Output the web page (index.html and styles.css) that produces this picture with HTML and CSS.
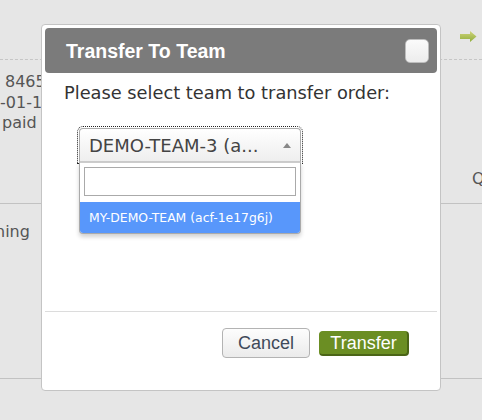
FILE: index.html
```html
<!DOCTYPE html>
<html>
<head>
<meta charset="utf-8">
<link rel="stylesheet" href="styles.css">
</head>
<body>
<div class="page">
  <div class="row row-head">
    <svg class="go-icon" width="17" height="11" viewBox="0 0 17 11">
      <defs>
        <linearGradient id="ga" x1="0" y1="0" x2="0" y2="1">
          <stop offset="0" stop-color="#d0d37a"/>
          <stop offset="1" stop-color="#8fae3c"/>
        </linearGradient>
      </defs>
      <path d="M0 3 H10 V0 L16.5 5.5 L10 11 V8 H0 Z" fill="url(#ga)"/>
    </svg>
  </div>
  <div class="row row-order">
    <div class="cell-left">
      <div class="l1">8465</div>
      <div class="l2">-01-10</div>
      <div class="l3">paid</div>
    </div>
    <div class="cell-right">Q</div>
  </div>
  <div class="row row-status">
    <div class="cell-left">ning</div>
  </div>
</div>

<div class="dialog">
  <div class="titlebar">
    <span class="title">Transfer To Team</span>
    <button class="close" aria-label="close"></button>
  </div>
  <div class="content">
    <p class="prompt">Please select team to transfer order:</p>
    <div class="select">
      <div class="select-box">
        <span class="select-text">DEMO-TEAM-3 (a...</span>
        <span class="caret"></span>
      </div>
      <div class="dropdown">
        <div class="search"><input type="text"></div>
        <ul class="options">
          <li class="option highlighted">MY-DEMO-TEAM (acf-1e17g6j)</li>
        </ul>
      </div>
    </div>
  </div>
  <div class="footer">
    <button class="btn btn-cancel">Cancel</button>
    <button class="btn btn-transfer">Transfer</button>
  </div>
</div>
</body>
</html>
```

FILE: styles.css
```css
html, body {
  margin: 0;
  padding: 0;
}
body {
  width: 482px;
  height: 420px;
  background: #e6e6e6;
  position: relative;
  overflow: hidden;
  font-family: "DejaVu Sans", sans-serif;
  color: #555;
}
.page {
  display: flex;
  flex-direction: column;
}
.row {
  display: flex;
}
.row-head {
  height: 60px;
  box-sizing: border-box;
  border-bottom: 1px dashed #c6c6c6;
  justify-content: flex-end;
  align-items: flex-start;
  padding-top: 31px;
  padding-right: 5px;
}
.go-icon {
  display: block;
}
.row-order {
  height: 144px;
  box-sizing: border-box;
  border-bottom: 1px solid #c2c2c2;
  justify-content: space-between;
  font-size: 16px;
  line-height: 20.5px;
}
.row-order .cell-left {
  padding-top: 12px;
}
.row-order .l1 { padding-left: 5px; }
.row-order .l2 { padding-left: 0; }
.row-order .l3 { padding-left: 2px; }
.row-order .cell-right {
  padding-top: 109px;
  width: 10px;
  overflow: hidden;
}
.row-status {
  height: 175px;
  box-sizing: border-box;
  border-bottom: 1px solid #c2c2c2;
  font-size: 16px;
  line-height: 20.5px;
}
.row-status .cell-left {
  padding-top: 18px;
  margin-left: -5px;
}

/* dialog */
.dialog {
  position: absolute;
  left: 41px;
  top: 24px;
  width: 392px;
  height: 359px;
  padding: 3px;
  background: #fff;
  border: 1px solid #c4c4c4;
  border-radius: 4px;
  display: flex;
  flex-direction: column;
}
.titlebar {
  height: 45px;
  flex: none;
  background: #7b7b7b;
  border-radius: 4px;
  display: flex;
  align-items: center;
  padding-left: 21px;
  padding-right: 8px;
}
.title {
  font-family: "Liberation Sans", Arial, sans-serif;
  font-weight: bold;
  font-size: 19.5px;
  color: #fff;
  flex: 1;
  padding-top: 1px;
}
.close {
  width: 24px;
  height: 24px;
  padding: 0;
  margin: 0;
  border: 1px solid #bdbdbd;
  border-radius: 5px;
  background: linear-gradient(#fbfbfb, #ececec);
}
.content {
  height: 238px;
  flex: none;
  padding: 0 0 0 19px;
}
.prompt {
  margin: 0;
  padding-top: 9px;
  font-family: "DejaVu Sans", sans-serif;
  font-size: 17.8px;
  line-height: 22px;
  color: #333;
}
.select {
  margin: 24px 0 0 15px;
  width: 222px;
}
.select-box {
  height: 34px;
  box-sizing: border-box;
  border: 1px solid #aaa;
  border-bottom-color: #ccc;
  border-radius: 4px 4px 0 0;
  background: linear-gradient(#fff, #eee);
  display: flex;
  align-items: center;
  padding-left: 9px;
  padding-right: 9px;
  outline: 1px dotted #222;
  outline-offset: 1px;
}
.select-text {
  flex: 1;
  font-family: "DejaVu Sans", sans-serif;
  font-size: 18px;
  color: #444;
  white-space: nowrap;
}
.caret {
  width: 0;
  height: 0;
  border-left: 4.5px solid transparent;
  border-right: 4.5px solid transparent;
  border-bottom: 5px solid #888;
}
.dropdown {
  position: relative;
  border: 1px solid #aaa;
  border-top: 1px solid #ccc;
  border-radius: 0 0 4px 4px;
  background: #fff;
  box-shadow: 0 3px 4px rgba(0,0,0,0.18);
  margin-bottom: -74px;
  padding: 4px 4px 0 4px;
}
.search input {
  display: block;
  box-sizing: border-box;
  width: 212px;
  height: 29px;
  margin: 0;
  border: 1px solid #aaa;
  padding: 0 4px;
  outline: none;
}
.options {
  list-style: none;
  margin: 6px -4px 0 -4px;
  padding: 0;
}
.option {
  height: 31px;
  line-height: 31px;
  padding-left: 9px;
  font-family: "DejaVu Sans", sans-serif;
  font-size: 12.4px;
  border-radius: 0 0 3px 3px;
}
.option.highlighted {
  background: #5897fb;
  color: #fff;
}
.footer {
  border-top: 1px solid #dcdcdc;
  display: flex;
  justify-content: flex-end;
  align-items: center;
  gap: 9px;
  padding: 16px 28px 0 0;
}
.btn {
  font-family: "Liberation Sans", Arial, sans-serif;
  font-size: 18px;
  margin: 0;
  cursor: pointer;
}
.btn-cancel {
  width: 88px;
  height: 30px;
  border: 1px solid #b3b3b3;
  border-radius: 4px;
  background: linear-gradient(#fdfdfd, #ebebeb);
  color: #3f4a5a;
  padding: 0;
}
.btn-transfer {
  width: 90px;
  height: 25px;
  border: 1px solid #557520;
  border-right-width: 2px;
  border-bottom-width: 2px;
  border-color: #6b8e23 #4b6517 #4b6517 #6b8e23;
  border-radius: 4px;
  background: #6b8e23;
  color: #fff;
  padding: 0;
  line-height: 20px;
}
```
